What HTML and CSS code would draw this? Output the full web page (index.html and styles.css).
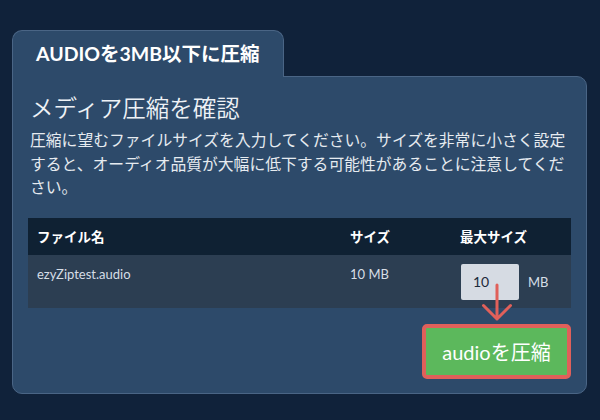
FILE: index.html
```
<!DOCTYPE html>
<html lang="ja">
<head>
<meta charset="utf-8">
<link rel="stylesheet" href="styles.css">
</head>
<body>
<div class="wrap">
  <div class="tab">AUDIOを3MB以下に圧縮</div>
  <div class="panel">
    <h2 class="heading">メディア圧縮を確認</h2>
    <p class="desc">圧縮に望むファイルサイズを入力してください。サイズを非常に小さく設定すると、オーディオ品質が大幅に低下する可能性があることに注意してください。</p>
    <div class="table">
      <div class="thead">
        <div class="cell">ファイル名</div>
        <div class="cell">サイズ</div>
        <div class="cell">最大サイズ</div>
      </div>
      <div class="trow">
        <div class="cell">ezyZiptest.audio</div>
        <div class="cell">10 MB</div>
        <div class="cell maxcell"><span class="input">10</span><span class="unit">MB</span></div>
      </div>
    </div>
    <div class="actions">
      <button class="btn">audioを圧縮</button>
    </div>
    <svg class="arrow" width="34" height="40" viewBox="0 0 34 40">
      <path d="M17 2 L17 36 M3.5 22.5 L17 36 L30.5 22.5" fill="none" stroke="#e0605a" stroke-width="3" stroke-linecap="round" stroke-linejoin="round"/>
    </svg>
  </div>
</div>
</body>
</html>
```
FILE: styles.css
```
html, body {
  margin: 0;
  padding: 0;
}
body {
  background: #10223a;
  font-family: Lato, "Noto Sans CJK JP", sans-serif;
  color: #ffffff;
  width: 600px;
  height: 420px;
  overflow: hidden;
}
.wrap {
  padding: 30px 13px 0 12px;
}
.tab {
  position: relative;
  z-index: 1;
  box-sizing: border-box;
  width: 272px;
  height: 47px;
  margin-bottom: -1px;
  background: #2d4a6a;
  border: 1px solid #4a6585;
  border-bottom: none;
  border-radius: 10px 10px 0 0;
  font-family: Lato, "Noto Sans CJK JP", sans-serif;
  font-weight: 700;
  font-size: 19.5px;
  line-height: 46px;
  padding-left: 23px;
}
.panel {
  position: relative;
  box-sizing: border-box;
  width: 575px;
  height: 318px;
  background: #2d4a6a;
  border: 1px solid #4a6585;
  border-radius: 0 10px 10px 10px;
  padding: 14px 15px 0 15px;
}
.heading {
  margin: 0;
  padding-left: 2px;
  font-family: "Noto Sans CJK JP", sans-serif;
  font-weight: 350;
  font-size: 23.5px;
  line-height: 32px;
  color: #eef2f6;
}
.desc {
  margin: 5px 0 0 0;
  padding-left: 2px;
  font-family: "Noto Sans CJK JP", sans-serif;
  font-size: 15.8px;
  line-height: 23.5px;
  color: #e6ebf0;
}
.table {
  margin-top: 19px;
}
.thead, .trow {
  display: grid;
  grid-template-columns: 313px 110px 1fr;
}
.thead {
  background: #0f2133;
  height: 37px;
  align-items: center;
}
.thead .cell {
  font-family: Lato, "Noto Sans CJK JP", sans-serif;
  font-weight: 700;
  font-size: 13.5px;
  color: #ffffff;
  padding-left: 9px;
}
.trow {
  background: #2c3e52;
  height: 53px;
}
.trow .cell {
  font-size: 13px;
  color: #d6dde6;
  padding: 11px 0 0 9px;
  line-height: 16px;
}
.trow .maxcell {
  display: flex;
  align-items: center;
  padding: 9px 0 0 10px;
  align-self: start;
}
.input {
  box-sizing: border-box;
  width: 58px;
  height: 36px;
  background: #d6dbe3;
  border-radius: 2px;
  color: #1c2a3a;
  font-size: 14px;
  line-height: 36px;
  padding-left: 12px;
}
.unit {
  margin-left: 9px;
  font-size: 13px;
  color: #d6dde6;
}
.actions {
  display: flex;
  justify-content: flex-end;
  margin-top: 16px;
}
.btn {
  box-sizing: border-box;
  width: 149px;
  height: 55px;
  background: #5cb85c;
  border: 4px solid #e0605a;
  border-radius: 5px;
  color: #ffffff;
  font-family: Lato, "Noto Sans CJK JP", sans-serif;
  font-size: 20px;
  padding: 0;
}
.arrow {
  position: absolute;
  left: 467px;
  top: 206px;
}
```
